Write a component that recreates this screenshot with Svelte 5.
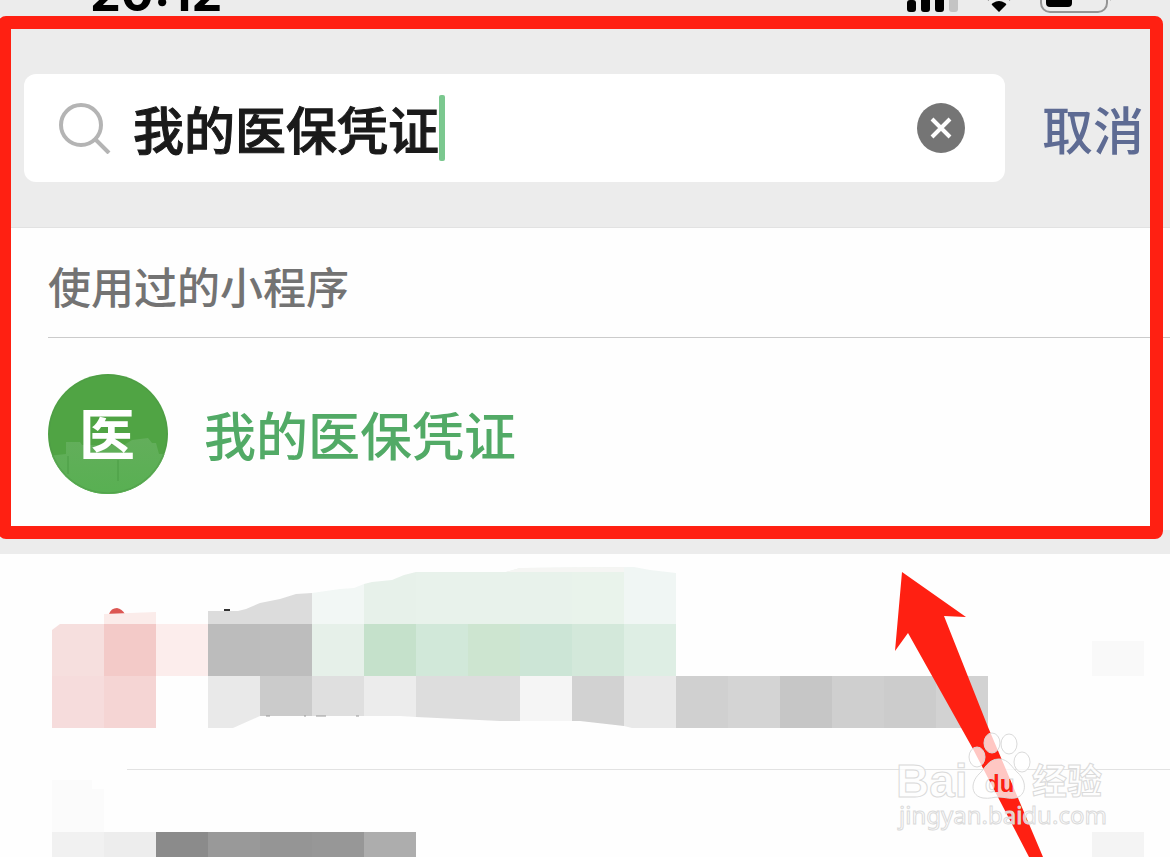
<script>
	let query = $state('我的医保凭证');
	let searchInput;

	const used = [{ name: '我的医保凭证', badge: '医' }];

	// one mosaic cell is 52 x 52
	const CELL = 52;

	const upperCells = [
		{ x: 312, fill: '#f2f7f5' },
		{ x: 364, fill: '#e7f1ea' },
		{ x: 416, fill: '#e8f2eb' },
		{ x: 468, fill: '#e8f2eb' },
		{ x: 520, fill: '#e8f2eb' },
		{ x: 572, fill: '#e9f3eb' },
		{ x: 624, fill: '#f0f6f4' }
	];

	const middleCells = [
		{ x: 104, fill: '#f3cac8' },
		{ x: 156, fill: '#fcedec' },
		{ x: 208, fill: '#bcbcbc' },
		{ x: 260, fill: '#bdbdbd' },
		{ x: 312, fill: '#e6f0e9' },
		{ x: 364, fill: '#c5e1cb' },
		{ x: 416, fill: '#d1e8d9' },
		{ x: 468, fill: '#cde5d0' },
		{ x: 520, fill: '#cce5d6' },
		{ x: 572, fill: '#d3e8da' },
		{ x: 624, fill: '#deeee4' }
	];

	const lowerCells = [
		{ x: 52, fill: '#f6dcdc' },
		{ x: 104, fill: '#f5d5d4' },
		{ x: 208, fill: '#e9e9e9' },
		{ x: 260, fill: '#cbcbcb' },
		{ x: 312, fill: '#dfdfdf' },
		{ x: 364, fill: '#ececec' },
		{ x: 416, fill: '#dddddd' },
		{ x: 468, fill: '#dddddd' },
		{ x: 520, fill: '#f5f5f5' },
		{ x: 572, fill: '#d2d2d2' },
		{ x: 624, fill: '#e9e9e9' },
		{ x: 676, fill: '#d0d0d0' },
		{ x: 728, fill: '#d4d4d4' },
		{ x: 780, fill: '#c6c6c6' },
		{ x: 832, fill: '#cfcfcf' },
		{ x: 884, fill: '#cccccc' },
		{ x: 936, fill: '#d2d2d2' }
	];

	const nextCells = [
		{ x: 52, fill: '#f1f1f1' },
		{ x: 104, fill: '#ededed' },
		{ x: 156, fill: '#8b8b8b' },
		{ x: 208, fill: '#999999' },
		{ x: 260, fill: '#959595' },
		{ x: 312, fill: '#979797' },
		{ x: 364, fill: '#adadad' },
		{ x: 1092, fill: '#f4f4f4' }
	];

	function clearQuery() {
		query = '';
		searchInput.focus();
	}
</script>

<div class="screen">
	<div class="status-bar">
		<span class="time">20:12</span>
		<svg class="status-icons" viewBox="900 -20 220 36" aria-hidden="true">
			<rect x="907" y="0" width="9" height="12" rx="3" />
			<rect x="921" y="-6" width="9" height="18" rx="3" />
			<rect x="935" y="-12" width="9" height="24" rx="3" />
			<rect x="949" y="-18" width="9" height="30" rx="3" fill="#c4c4c4" />
			<path d="M999 12 L992 5 Q991 4 993 3 Q999 -1 1005 3 Q1007 4 1006 5 Z" />
			<path d="M987 -1 Q999 -10 1011 -1" fill="none" stroke="#000" stroke-width="4" />
			<rect x="1041" y="-18" width="66" height="30" rx="9" fill="none" stroke="#949494" stroke-width="2" />
			<rect x="1046" y="-14" width="26" height="21" rx="4" />
			<path d="M1110 -8 Q1114 -4 1110 1 Z" fill="#949494" />
		</svg>
	</div>

	<section class="marked">
		<form class="search-header" onsubmit={(e) => e.preventDefault()}>
			<div class="search-box">
				<svg class="search-icon" viewBox="0 0 52 52" aria-hidden="true">
					<circle cx="22" cy="23" r="20" />
					<path d="M36 37 L50 51" />
				</svg>
				<input bind:this={searchInput} bind:value={query} type="text" aria-label="搜索" />
				<span class="caret"></span>
				<button class="clear" type="button" aria-label="清除" onclick={clearQuery}>
					<svg viewBox="0 0 48 50" aria-hidden="true">
						<ellipse cx="24" cy="25" rx="24" ry="25" />
						<path d="M15 16 L33 34 M33 16 L15 34" />
					</svg>
				</button>
			</div>
			<button class="cancel" type="button">取消</button>
		</form>

		<div class="results">
			<h2>使用过的小程序</h2>
			{#each used as app}
				<a class="app-row" href="#app">
					<svg class="avatar" viewBox="0 0 120 120" aria-hidden="true">
						<defs>
							<clipPath id="avatar-clip"><circle cx="60" cy="60" r="60" /></clipPath>
							<linearGradient id="skyline" x1="0" y1="0" x2="0" y2="1">
								<stop offset="0" stop-color="#63ae5b" />
								<stop offset="1" stop-color="#58b052" />
							</linearGradient>
						</defs>
						<g clip-path="url(#avatar-clip)">
							<rect width="120" height="120" fill="#50a444" />
							<path d="M0 82 L18 80 V68 H32 L34 71 H76 L84 66 L100 64 L104 69 H108 L111 80 H120 V120 H0 Z" fill="url(#skyline)" />
							<path d="M20 82 V100 M70 86 V107" stroke="#4b9c45" stroke-width="1" />
						</g>
						<circle cx="60" cy="60" r="59" fill="none" stroke="#4f9648" stroke-opacity=".6" />
						<text x="59" y="81" text-anchor="middle">{app.badge}</text>
					</svg>
					<span>{app.name}</span>
				</a>
			{/each}
		</div>
		<div class="frame"></div>
	</section>

	<section class="feed">
		<div class="feed-row">
			<svg class="mosaic first" viewBox="0 554 1170 215" preserveAspectRatio="xMinYMin slice" aria-hidden="true">
				<defs>
					<clipPath id="upper-edge">
						<path d="M312 593 L340 589 L354 588 L364 584 L372 582 L392 580 L404 575 L416 572 L506 572 L520 568 L634 567 L650 570 L676 573 V624 H312 Z" />
					</clipPath>
					<clipPath id="lower-edge">
						<path d="M52 676 H988 V728 H632 L624 726 L580 721 L500 721 L416 717 L400 716 H260 L233 728 H52 Z" />
					</clipPath>
				</defs>
				<path d="M109 614 Q111 608 117 608 Q122 609 125 614 Z" fill="#dc5753" />
				<path d="M104 614 L156 612 V624 H104 Z" fill="#fbecea" />
				<path d="M208 611 H238 L246 609 L260 603 L280 599 L296 594 L312 593 V624 H208 Z" fill="#dcdcdc" />
				<path d="M224 609 H230 V611 H224 Z" fill="#333" />
				<g clip-path="url(#upper-edge)">
					{#each upperCells as cell}
						<rect x={cell.x} y="566" width={CELL} height="58" fill={cell.fill} />
					{/each}
					<rect x="506" y="566" width="118" height="6" fill="#f5f5f3" />
				</g>
				<path d="M52 630 L60 624 H104 V676 H52 Z" fill="#f6dfde" />
				{#each middleCells as cell}
					<rect x={cell.x} y="624" width={CELL} height={CELL} fill={cell.fill} />
				{/each}
				<g clip-path="url(#lower-edge)">
					{#each lowerCells as cell}
						<rect x={cell.x} y="676" width={CELL} height={CELL} fill={cell.fill} />
					{/each}
				</g>
				<path d="M266 716 h4 M304 716 h2 M316 716 h10 M356 716 h3" stroke="#999" stroke-width="1" />
				<rect x="1092" y="641" width={CELL} height="35" fill="#f9f9f9" />
			</svg>
		</div>
		<div class="feed-row">
			<svg class="mosaic next" viewBox="0 770 1170 87" preserveAspectRatio="xMinYMin slice" aria-hidden="true">
				<path d="M52 780 H92 V789 H104 V832 H52 Z" fill="#fbfbfb" />
				{#each nextCells as cell}
					<rect x={cell.x} y="832" width={CELL} height={CELL} fill={cell.fill} />
				{/each}
			</svg>
		</div>

		<svg class="overlay" viewBox="880 560 290 297">
			<defs>
				<clipPath id="arrow-clip">
					<path d="M902 572 L966 617 L944 616 L988 727 L1043 857 H1029 L973 749 L908 633 L895 651 Z" />
				</clipPath>
			</defs>
			<path d="M902 572 L966 617 L944 616 L988 727 L1043 857 H1029 L973 749 L908 633 L895 651 Z" fill="#ff2012" />
			<g class="watermark">
				<ellipse cx="977" cy="757" rx="8" ry="10" />
				<ellipse cx="992" cy="743" rx="8" ry="10" />
				<ellipse cx="1009" cy="744" rx="8" ry="10" />
				<ellipse cx="1022" cy="762" rx="8" ry="10" />
				<path d="M999 759 C1009 759 1012 768 1018 773 C1027 781 1027 796 1015 798 C1008 799 1005 797 999 797 C993 797 990 799 983 798 C971 796 970 783 979 774 C985 769 988 759 999 759 Z" />
				<text class="brand" x="896" y="797">Bai</text>
				<text class="du" x="985" y="792">du</text>
				<text class="brand-cn" x="1032" y="794">经验</text>
				<text class="url" x="899" y="824">jingyan.baidu.com</text>
			</g>
			<g clip-path="url(#arrow-clip)">
				<text class="du cutout" x="985" y="792" aria-hidden="true">du</text>
			</g>
		</svg>
	</section>
</div>

<style>
	:global(body) {
		margin: 0;
		background: #fefefe;
	}

	.screen {
		overflow: hidden;
		font-family: "Noto Sans CJK SC", sans-serif;
		background: #fefefe;
	}

	.status-bar {
		display: flex;
		justify-content: space-between;
		align-items: flex-end;
		height: 16px;
		padding: 0 50px 0 90px;
		background: #ececec;
		overflow: hidden;
	}

	.time {
		font-family: Inter, sans-serif;
		font-size: 49px;
		font-weight: 700;
		line-height: 44px;
	}

	.status-icons {
		width: 220px;
		height: 36px;
	}

	.marked {
		position: relative;
	}

	.frame {
		position: absolute;
		z-index: 2;
		inset: 0 7px -9px -2px;
		border: 13px solid #ff2012;
		border-radius: 8px;
		pointer-events: none;
	}

	.search-header {
		display: flex;
		align-items: center;
		gap: 37px;
		padding: 58px 26px 45px 24px;
		background: #ececec;
		border-bottom: 1px solid #e2e2e2;
	}

	.search-box {
		display: flex;
		flex: 1;
		align-items: center;
		min-width: 0;
		height: 108px;
		padding: 0 40px 0 35px;
		box-sizing: border-box;
		background: #fff;
		border-radius: 12px;
	}

	.search-icon {
		flex-shrink: 0;
		width: 52px;
		height: 52px;
		margin-right: 22px;
		fill: none;
		stroke: #b4b4b4;
		stroke-width: 4;
	}

	.search-box input {
		field-sizing: content;
		min-width: 0;
		padding: 0;
		border: none;
		outline: none;
		background: transparent;
		color: #1a1a1a;
		font: 500 51px/76px "Noto Sans CJK SC", sans-serif;
		-webkit-text-stroke: 1px #1a1a1a;
	}

	.caret {
		flex-shrink: 0;
		width: 6px;
		height: 66px;
		background: #7bc88f;
		border-radius: 2px;
	}

	.clear {
		display: flex;
		flex-shrink: 0;
		margin-left: auto;
		padding: 0;
		border: none;
		background: none;
		cursor: pointer;
	}

	.clear svg {
		width: 48px;
		height: 50px;
		fill: #757575;
	}

	.clear path {
		fill: none;
		stroke: #fff;
		stroke-width: 4;
	}

	.cancel {
		padding: 0;
		border: none;
		background: none;
		color: #5e6b93;
		font: 500 51px/76px "Noto Sans CJK SC", sans-serif;
		cursor: pointer;
	}

	.results {
		padding-left: 48px;
	}

	h2 {
		margin: 0;
		padding: 26px 0 20px;
		border-bottom: 1px solid #cbcbcb;
		color: #737373;
		font-size: 43px;
		font-weight: 500;
		line-height: 63px;
	}

	.app-row {
		display: flex;
		align-items: center;
		gap: 36px;
		padding: 36px 0;
		color: #52aa66;
		font-size: 52px;
		font-weight: 500;
		line-height: 76px;
		text-decoration: none;
	}

	.avatar {
		width: 120px;
		height: 120px;
	}

	.avatar text {
		fill: #fff;
		font-size: 56px;
		font-weight: 700;
	}

	.feed {
		position: relative;
		border-top: 24px solid #ececec;
	}

	.feed-row + .feed-row::before {
		content: '';
		display: block;
		height: 1px;
		margin-left: 127px;
		background: #e2e2e2;
	}

	.mosaic {
		display: block;
		width: 100%;
	}

	.first {
		height: 215px;
	}

	.next {
		height: 87px;
	}

	.overlay {
		position: absolute;
		top: 6px;
		right: 0;
		width: 290px;
		height: 297px;
	}

	.watermark {
		fill: rgba(255, 255, 255, 0.75);
		stroke: #dadada;
		stroke-width: 1;
	}

	.brand {
		font: 700 46px "Liberation Sans", sans-serif;
	}

	.du {
		font: 700 24px "Liberation Sans", sans-serif;
	}

	.cutout {
		fill: #ff2012;
	}

	.brand-cn {
		font: 700 35px "Noto Sans CJK SC", sans-serif;
	}

	.url {
		font: 400 24px "Noto Sans", sans-serif;
	}
</style>
